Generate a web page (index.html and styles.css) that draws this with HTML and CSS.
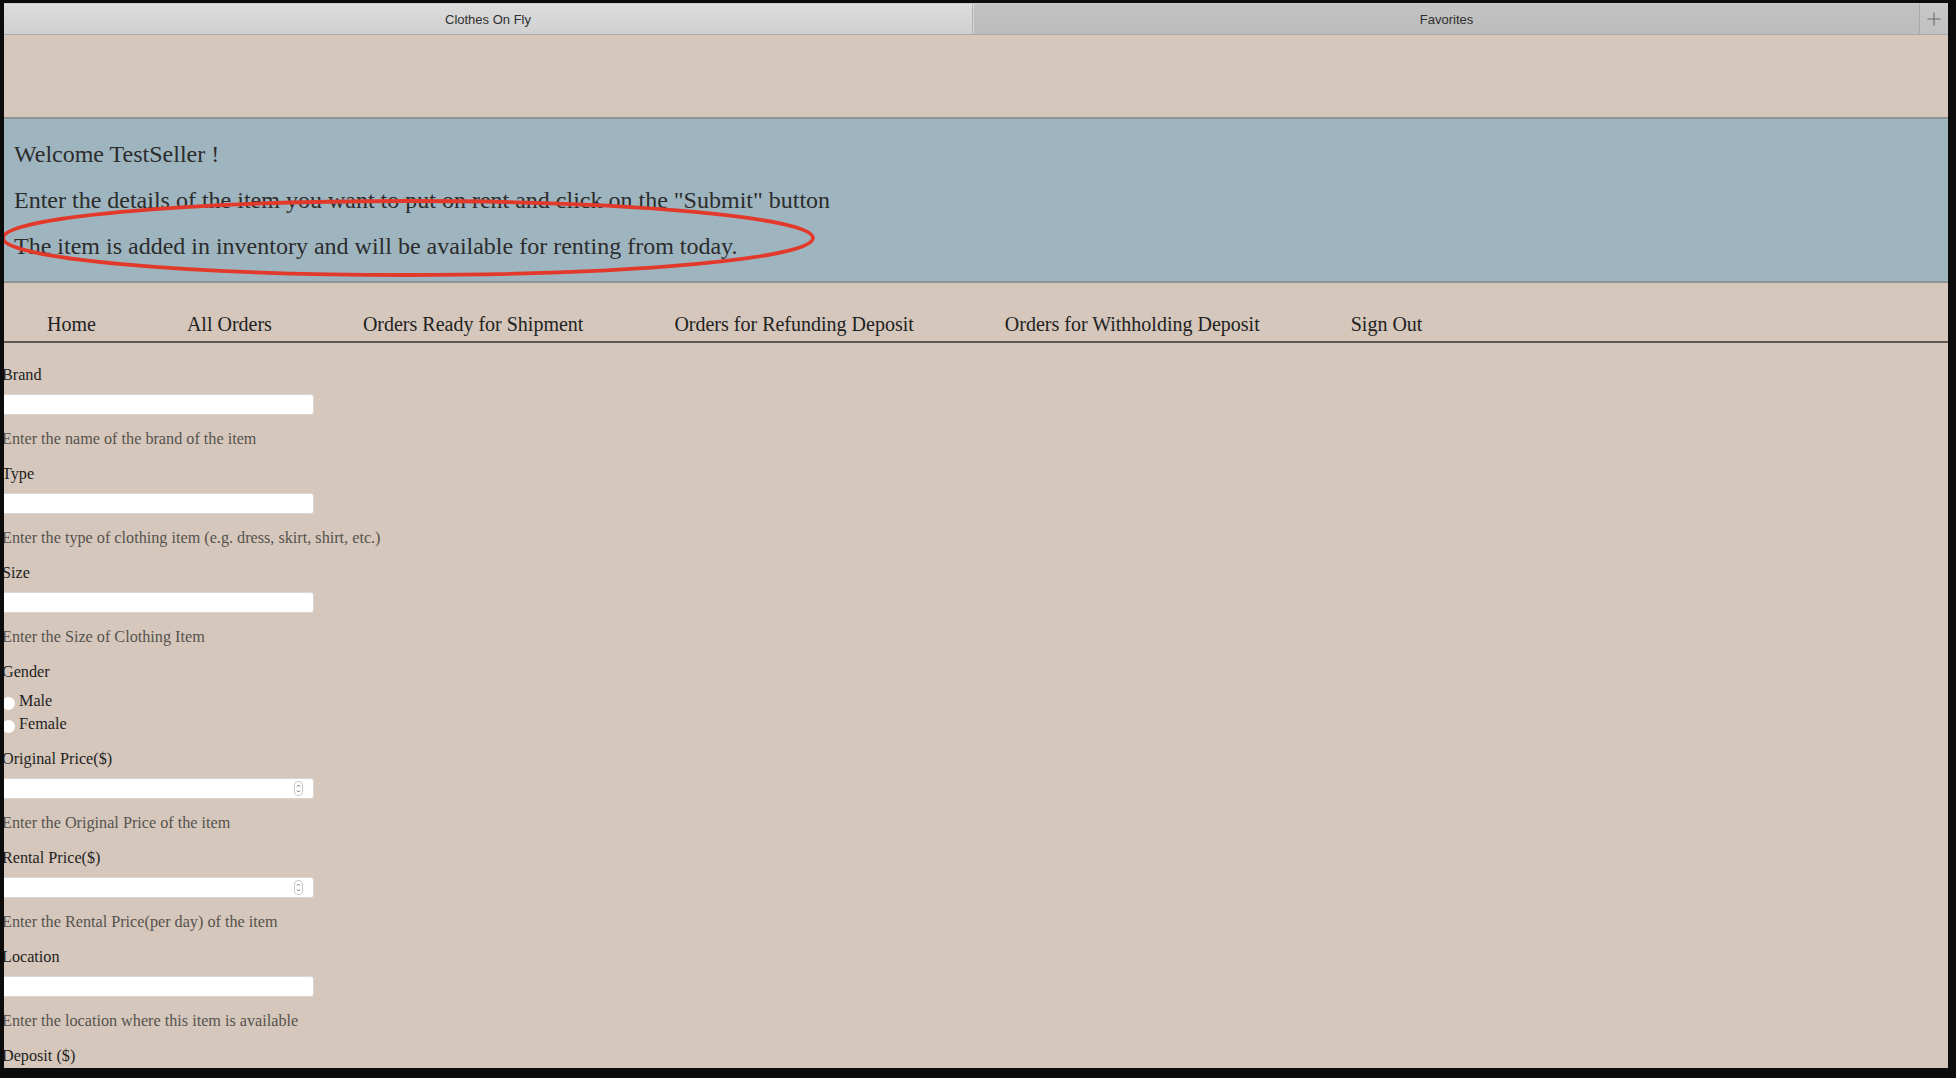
FILE: index.html
```html
<!DOCTYPE html>
<html lang="en">
<head>
<meta charset="utf-8">
<title>Clothes On Fly</title>
<link rel="stylesheet" href="styles.css">
</head>
<body>
<div class="screen">
  <div class="window">
    <div class="tabbar">
      <div class="tab tab-active">Clothes On Fly</div>
      <div class="tab tab-inactive">Favorites</div>
      <div class="tab-add">
        <svg width="14" height="14" viewBox="0 0 14 14"><path d="M7 0.5V13.5M0.5 7H13.5" stroke="#6a6a6a" stroke-width="1.1" fill="none"/></svg>
      </div>
    </div>
    <div class="page">
      <div class="top-spacer"></div>
      <header class="banner">
        <p>Welcome TestSeller !</p>
        <p>Enter the details of the item you want to put on rent and click on the "Submit" button</p>
        <p>The item is added in inventory and will be available for renting from today.</p>
      </header>
      <nav class="nav">
        <a href="#">Home</a>
        <a href="#">All Orders</a>
        <a href="#">Orders Ready for Shipment</a>
        <a href="#">Orders for Refunding Deposit</a>
        <a href="#">Orders for Withholding Deposit</a>
        <a href="#">Sign Out</a>
      </nav>
      <form class="form">
        <div class="field">
          <label class="label">Brand</label>
          <input class="text-input" type="text">
          <div class="help">Enter the name of the brand of the item</div>
        </div>
        <div class="field">
          <label class="label">Type</label>
          <input class="text-input" type="text">
          <div class="help">Enter the type of clothing item (e.g. dress, skirt, shirt, etc.)</div>
        </div>
        <div class="field">
          <label class="label">Size</label>
          <input class="text-input" type="text">
          <div class="help">Enter the Size of Clothing Item</div>
        </div>
        <div class="field">
          <label class="label label-gender">Gender</label>
          <div class="radio-group">
            <label class="radio-row"><input class="radio" type="radio" name="gender"><span>Male</span></label>
            <label class="radio-row"><input class="radio" type="radio" name="gender"><span>Female</span></label>
          </div>
        </div>
        <div class="field">
          <label class="label">Original Price($)</label>
          <div class="number-wrap">
            <input class="text-input" type="text">
            <span class="spinner"><svg width="9" height="15" viewBox="0 0 9 15"><rect x="0.5" y="0.5" width="8" height="14" rx="3.5" fill="#fff" stroke="#c9c9c9"/><path d="M3 5.5L4.5 4L6 5.5M3 9.5L4.5 11L6 9.5" stroke="#555" stroke-width="0.9" fill="none"/></svg></span>
          </div>
          <div class="help">Enter the Original Price of the item</div>
        </div>
        <div class="field">
          <label class="label">Rental Price($)</label>
          <div class="number-wrap">
            <input class="text-input" type="text">
            <span class="spinner"><svg width="9" height="15" viewBox="0 0 9 15"><rect x="0.5" y="0.5" width="8" height="14" rx="3.5" fill="#fff" stroke="#c9c9c9"/><path d="M3 5.5L4.5 4L6 5.5M3 9.5L4.5 11L6 9.5" stroke="#555" stroke-width="0.9" fill="none"/></svg></span>
          </div>
          <div class="help">Enter the Rental Price(per day) of the item</div>
        </div>
        <div class="field">
          <label class="label">Location</label>
          <input class="text-input" type="text">
          <div class="help">Enter the location where this item is available</div>
        </div>
        <div class="field">
          <label class="label">Deposit ($)</label>
          <input class="text-input" type="text">
          <div class="help">Enter the deposit amount for the item</div>
        </div>
      </form>
      <svg class="annotation" width="830" height="90" viewBox="0 0 830 90">
        <ellipse cx="408" cy="43" rx="405" ry="37" fill="none" stroke="#e3392b" stroke-width="3.8"/>
      </svg>
    </div>
  </div>
</div>
</body>
</html>
```

FILE: styles.css
```css
html, body {
  margin: 0;
  padding: 0;
  background: #000;
}

.screen {
  width: 1956px;
  height: 1078px;
  box-sizing: border-box;
  padding: 3px 8px 10px 4px;
  background: #0c0c0c;
  overflow: hidden;
}

.window {
  height: 100%;
  display: flex;
  flex-direction: column;
  background: #d5c7bb;
  overflow: hidden;
}

.tabbar {
  display: flex;
  height: 32px;
  flex: 0 0 32px;
  box-sizing: border-box;
  border-top: 1px solid #c8c8c8;
  border-bottom: 1px solid #a9a9a9;
  font-family: "Liberation Sans", Arial, sans-serif;
  font-size: 13px;
  color: #2f2f2f;
}

.tab {
  display: flex;
  align-items: center;
  justify-content: center;
}

.tab-active {
  width: 969px;
  flex: 0 0 969px;
  background: linear-gradient(#dcdcdc, #d0d0d0);
  border-top: 1px solid #e6e6e6;
  border-right: 1px solid #b2b2b2;
  box-sizing: border-box;
}

.tab-inactive {
  flex: 1 1 auto;
  background: linear-gradient(#c3c3c3, #bbbbbb);
  border-left: 1px solid #d6d6d6;
}

.tab-add {
  width: 29px;
  flex: 0 0 29px;
  box-sizing: border-box;
  display: flex;
  align-items: center;
  justify-content: center;
  background: linear-gradient(#c8c8c8, #c0c0c0);
  border-left: 1px solid #aaaaaa;
}

.page {
  position: relative;
  flex: 1 1 auto;
  font-family: "Liberation Serif", "Times New Roman", serif;
}

.top-spacer {
  height: 82px;
}

.banner {
  background: #9eb5bf;
  border-top: 2px solid #8b9497;
  border-bottom: 2px solid #8b9497;
  padding: 2px 0 1px 10px;
  color: #2c2c2c;
  font-size: 24px;
  line-height: 25px;
}

.banner p {
  margin: 21px 0;
}

.nav {
  display: flex;
  gap: 91px;
  padding: 30px 0 5px 43px;
  border-bottom: 2px solid #5e5954;
  font-size: 20px;
  line-height: 23px;
}

.nav a {
  color: #222;
  text-decoration: none;
}

.form {
  margin-left: -2px;
  padding-top: 23px;
  font-size: 16.2px;
  line-height: 18px;
}

.field {
  display: flex;
  flex-direction: column;
  align-items: flex-start;
}

.label {
  display: block;
  color: #1f1f1f;
  margin-bottom: 10px;
}

.label-gender {
  margin-bottom: 8px;
}

.text-input {
  display: block;
  width: 312px;
  height: 21px;
  box-sizing: border-box;
  margin: 0 0 15px 0;
  padding: 0;
  border: 1px solid #d9d6d3;
  border-radius: 3px;
  background: #fff;
  outline: none;
}

.number-wrap {
  position: relative;
}

.spinner {
  position: absolute;
  right: 11px;
  top: 3px;
  width: 9px;
  height: 15px;
  display: block;
}

.spinner svg {
  display: block;
}

.help {
  color: #565350;
  margin-bottom: 17px;
}

.radio-group {
  display: flex;
  flex-direction: column;
  margin-bottom: 15px;
}

.radio-row {
  display: flex;
  align-items: center;
  height: 23px;
  color: #1f1f1f;
}

.radio {
  appearance: none;
  -webkit-appearance: none;
  width: 13px;
  height: 13px;
  margin: 8px 4px 0 0;
  border-radius: 50%;
  background: #fff;
  border: none;
  align-self: flex-start;
}

.radio-row span {
  line-height: 18px;
}

.annotation {
  position: absolute;
  left: -4px;
  top: 160px;
  pointer-events: none;
}
```
